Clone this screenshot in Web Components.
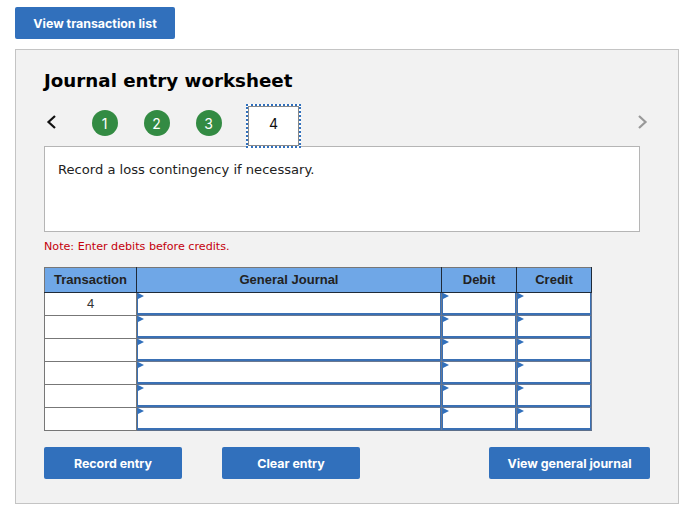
<!DOCTYPE html>
<html>
<head>
<meta charset="utf-8">
<title>Journal entry worksheet</title>
<style>
  html, body { margin: 0; background: #fff; }
  body { padding: 7px 16px 0 15px; font-family: "DejaVu Sans", sans-serif; }
</style>
</head>
<body>
<action-button style="--btn-width: 160px">View transaction list</action-button>
<journal-worksheet></journal-worksheet>

<script>
class ActionButton extends HTMLElement {
  connectedCallback() {
    if (this.shadowRoot) return;
    this.attachShadow({ mode: 'open' });
    this.shadowRoot.innerHTML = `
      <style>
        :host { display: block; width: var(--btn-width, 138px); }
        button {
          display: block;
          width: 100%;
          height: 32px;
          padding: 0;
          border: 0;
          border-radius: 2px;
          background: #3170bc;
          color: #fff;
          font: 700 12.4px Inter, "Liberation Sans", sans-serif;
          text-align: center;
        }
      </style>
      <button><slot></slot></button>
    `;
  }
}

class StepNav extends HTMLElement {
  connectedCallback() {
    if (this.shadowRoot) return;
    this.attachShadow({ mode: 'open' });
    const done = [1, 2, 3];
    this.shadowRoot.innerHTML = `
      <style>
        :host { display: flex; align-items: flex-start; height: 44px; position: relative; z-index: 1; }
        svg { display: block; }
        .prev { width: 16px; height: 18px; margin: 9px 32px 0 0; }
        .step {
          width: 26px; height: 26px; margin: 6px 26px 0 0;
          padding-right: 1px;
          box-sizing: border-box;
          border-radius: 50%;
          background: #338b43;
          color: #fff;
          font: 400 14px Inter, "Liberation Sans", sans-serif;
          display: flex; align-items: center; justify-content: center;
        }
        .current {
          box-sizing: border-box;
          width: 55px; height: 44px;
          margin-left: -2px;
          outline: 2px dotted #3170bc;
          outline-offset: -2px;
          background: #fff;
          border: 2px solid transparent;
          box-shadow: inset 0 0 0 1px #8a8a8a;
          color: #111;
          font: 400 14px Inter, "Liberation Sans", sans-serif;
          display: flex; align-items: center; justify-content: center;
          padding-bottom: 6px;
        }
        .next { width: 16px; height: 18px; margin: 9px 0 0 auto; }
      </style>
      <svg class="prev" viewBox="0 0 16 18"><path d="M11 3 L4.5 9 L11 15" fill="none" stroke="#111" stroke-width="2.2"/></svg>
      ${done.map(n => `<div class="step">${n}</div>`).join('')}
      <div class="current">4</div>
      <svg class="next" viewBox="0 0 16 18"><path d="M5 3 L11.5 9 L5 15" fill="none" stroke="#999" stroke-width="2.2"/></svg>
    `;
  }
}

class JournalTable extends HTMLElement {
  connectedCallback() {
    if (this.shadowRoot) return;
    this.attachShadow({ mode: 'open' });
    const rows = ['4', '', '', '', '', ''];
    const entry = '<td class="entry"><div class="field"></div></td>';
    this.shadowRoot.innerHTML = `
      <style>
        :host { display: block; width: 547px; }
        table {
          border-collapse: collapse;
          table-layout: fixed;
          width: 547px;
          font-family: "Liberation Sans", Arial, sans-serif;
          font-size: 13px;
          color: #222;
        }
        th {
          height: 25px;
          padding: 0 0 2px;
          box-sizing: border-box;
          background: #6fa7e7;
          border: 1px solid #1f2a38;
          border-top-color: #777;
          border-left-color: #1f2a38;
          font-size: 13px;
          font-weight: 700;
        }
        th:first-child { border-left-color: #777; }
        td { height: 22px; padding: 0; background: #fff; border: 1px solid #777; }
        td.num { text-align: center; font-size: 13px; padding-bottom: 2px; height: 20px; color: #333; }
        td.entry { border-color: #6a7890; position: relative; }
        tbody tr:first-child td { border-top-color: #1f2a38; }
        .field {
          box-sizing: border-box;
          height: 22px;
          border: 1px solid #3a70b4;
          border-top: 0;
          border-bottom-width: 2px;
          position: relative;
        }
        .field::before {
          content: "";
          position: absolute;
          left: 0; top: 0;
          border-left: 6px solid #3170bc;
          border-top: 3.5px solid transparent;
          border-bottom: 3.5px solid transparent;
        }
        tr:last-child td.entry { border-bottom-color: #5d6f8a; }
      </style>
      <table>
        <colgroup><col style="width:92px"><col style="width:305px"><col style="width:75px"><col style="width:75px"></colgroup>
        <thead><tr><th>Transaction</th><th>General Journal</th><th>Debit</th><th>Credit</th></tr></thead>
        <tbody>
          ${rows.map(r => `<tr><td class="num">${r}</td>${entry}${entry}${entry}</tr>`).join('')}
        </tbody>
      </table>
    `;
  }
}

class JournalWorksheet extends HTMLElement {
  connectedCallback() {
    if (this.shadowRoot) return;
    this.attachShadow({ mode: 'open' });
    this.shadowRoot.innerHTML = `
      <style>
        :host {
          display: block;
          box-sizing: border-box;
          width: 664px;
          height: 455px;
          margin-top: 10px;
          padding: 19px 28px 0 28px;
          background: #f2f2f2;
          border: 1px solid #c4c4c4;
        }
        h2 { margin: 0 0 12px; font: 700 18.26px/23px "DejaVu Sans", sans-serif; color: #000; }
        .prompt {
          box-sizing: border-box;
          width: 596px;
          height: 86px;
          margin-top: -2px;
          padding: 14px 13px;
          background: #fff;
          border: 1px solid #b5b5b5;
          font-size: 13.1px;
          line-height: 17px;
          color: #222;
        }
        .note { margin: 8px 0 13px; font-size: 11.15px; line-height: 14px; color: #c4000c; }
        .actions { display: flex; margin-top: 16px; width: 606px; }
        .actions action-button + action-button { margin-left: 40px; }
        .actions action-button:last-child { margin-left: auto; }
      </style>
      <h2>Journal entry worksheet</h2>
      <step-nav></step-nav>
      <div class="prompt">Record a loss contingency if necessary.</div>
      <div class="note">Note: Enter debits before credits.</div>
      <journal-table></journal-table>
      <div class="actions">
        <action-button>Record entry</action-button>
        <action-button>Clear entry</action-button>
        <action-button style="--btn-width: 161px">View general journal</action-button>
      </div>
    `;
  }
}

customElements.define('action-button', ActionButton);
customElements.define('step-nav', StepNav);
customElements.define('journal-table', JournalTable);
customElements.define('journal-worksheet', JournalWorksheet);
</script>
</body>
</html>
